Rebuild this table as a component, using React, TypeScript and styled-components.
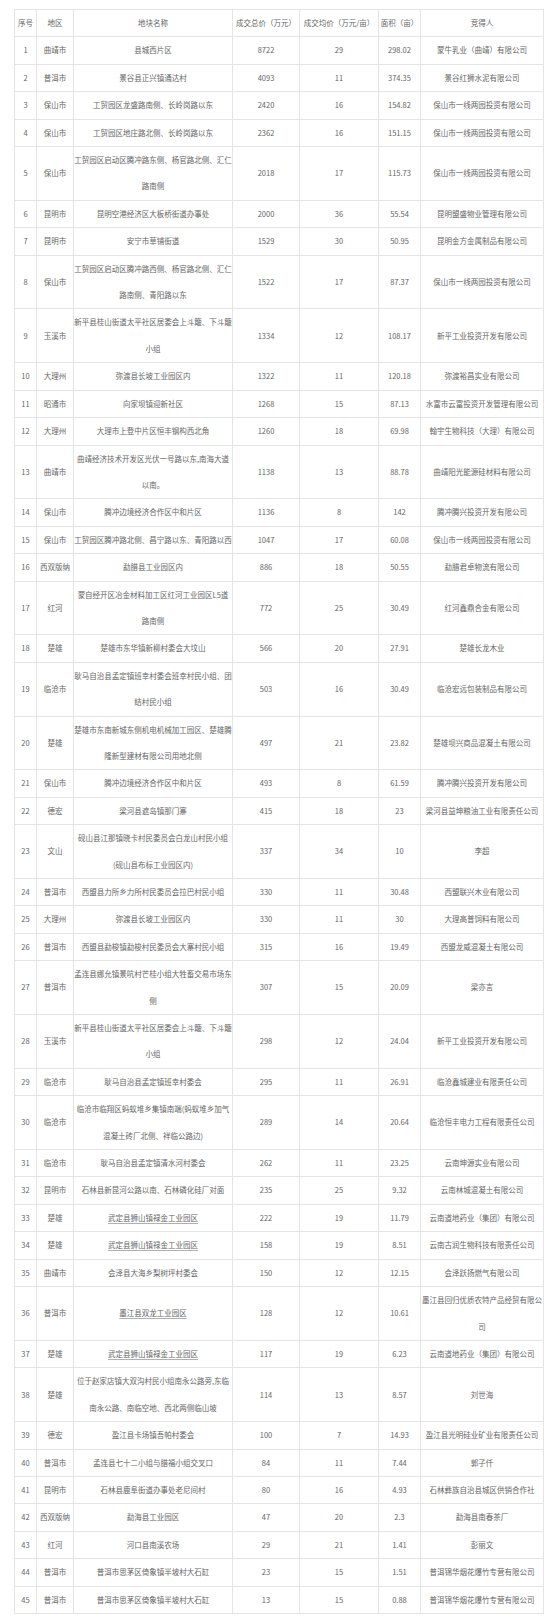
import React from "react";
import styled, { createGlobalStyle } from "styled-components";

const GlobalStyle = createGlobalStyle`
  html, body {
    margin: 0;
    padding: 0;
    background: #ffffff;
  }
  body {
    font-family: "Noto Sans CJK SC", "Microsoft YaHei", sans-serif;
  }
`;

const Page = styled.div`
  width: 550px;
  min-height: 1622px;
  box-sizing: border-box;
  padding: 9px 7px 0 14px;
  background: #ffffff;
`;

const Table = styled.table`
  width: 529px;
  table-layout: fixed;
  border-collapse: collapse;
  border: 1px solid #e4e4e4;
  color: #666666;
  font-family: "Noto Sans CJK SC", "Microsoft YaHei", sans-serif;
  font-size: 7.5px;
`;

const Col = styled.col<{ $w: number }>`
  width: ${(p) => p.$w}px;
`;

const HeadCell = styled.th`
  border: 1px solid #e4e4e4;
  padding: 0;
  font-weight: normal;
  text-align: center;
  line-height: 26.4px;
  white-space: nowrap;
  overflow: visible;
`;

const Cell = styled.td`
  border: 1px solid #e4e4e4;
  padding: 0;
  text-align: center;
  vertical-align: middle;
  line-height: 26.4px;
  overflow: visible;
`;

const Line = styled.span<{ $underline?: boolean }>`
  display: block;
  white-space: nowrap;
  text-decoration: ${(p) => (p.$underline ? "underline" : "none")};
  text-decoration-color: #b0b0b0;
  text-underline-offset: 2px;
`;

type Text = string | string[];
type Row = {
  no: number;
  region: string;
  name: Text;
  total: string;
  avg: string;
  area: string;
  buyer: Text;
  link?: boolean;
};

const headers = [
  "序号",
  "地区",
  "地块名称",
  "成交总价（万元）",
  "成交均价（万元/亩）",
  "面积（亩）",
  "竞得人",
];

const widths = [22, 37, 159, 67, 79, 42, 123];

const rows: Row[] = [
  { no: 1, region: "曲靖市", name: "县城西片区", total: "8722", avg: "29", area: "298.02", buyer: "蒙牛乳业（曲靖）有限公司" },
  { no: 2, region: "普洱市", name: "景谷县正兴镇通达村", total: "4093", avg: "11", area: "374.35", buyer: "景谷红狮水泥有限公司" },
  { no: 3, region: "保山市", name: "工贸园区龙盛路南侧、长岭岗路以东", total: "2420", avg: "16", area: "154.82", buyer: "保山市一线两园投资有限公司" },
  { no: 4, region: "保山市", name: "工贸园区地庄路北侧、长岭岗路以东", total: "2362", avg: "16", area: "151.15", buyer: "保山市一线两园投资有限公司" },
  { no: 5, region: "保山市", name: ["工贸园区启动区腾冲路东侧、杨官路北侧、汇仁", "路南侧"], total: "2018", avg: "17", area: "115.73", buyer: "保山市一线两园投资有限公司" },
  { no: 6, region: "昆明市", name: "昆明空港经济区大板桥街道办事处", total: "2000", avg: "36", area: "55.54", buyer: "昆明盟盛物业管理有限公司" },
  { no: 7, region: "昆明市", name: "安宁市草铺街道", total: "1529", avg: "30", area: "50.95", buyer: "昆明金方金属制品有限公司" },
  { no: 8, region: "保山市", name: ["工贸园区启动区腾冲路西侧、杨官路北侧、汇仁", "路南侧、青阳路以东"], total: "1522", avg: "17", area: "87.37", buyer: "保山市一线两园投资有限公司" },
  { no: 9, region: "玉溪市", name: ["新平县桂山街道太平社区居委会上斗簸、下斗簸", "小组"], total: "1334", avg: "12", area: "108.17", buyer: "新平工业投资开发有限公司" },
  { no: 10, region: "大理州", name: "弥渡县长坡工业园区内", total: "1322", avg: "11", area: "120.18", buyer: "弥渡裕昌实业有限公司" },
  { no: 11, region: "昭通市", name: "向家坝镇迎新社区", total: "1268", avg: "15", area: "87.13", buyer: "水富市云富投资开发管理有限公司" },
  { no: 12, region: "大理州", name: "大理市上登中片区恒丰钢构西北角", total: "1260", avg: "18", area: "69.98", buyer: "翰宇生物科技（大理）有限公司" },
  { no: 13, region: "曲靖市", name: ["曲靖经济技术开发区光伏一号路以东,南海大道", "以南。"], total: "1138", avg: "13", area: "88.78", buyer: "曲靖阳光能源硅材料有限公司" },
  { no: 14, region: "保山市", name: "腾冲边境经济合作区中和片区", total: "1136", avg: "8", area: "142", buyer: "腾冲腾兴投资开发有限公司" },
  { no: 15, region: "保山市", name: "工贸园区腾冲路北侧、昌宁路以东、青阳路以西", total: "1047", avg: "17", area: "60.08", buyer: "保山市一线两园投资有限公司" },
  { no: 16, region: "西双版纳", name: "勐腊县工业园区内", total: "886", avg: "18", area: "50.55", buyer: "勐腊君卓物流有限公司" },
  { no: 17, region: "红河", name: ["蒙自经开区冶金材料加工区红河工业园区L5道", "路南侧"], total: "772", avg: "25", area: "30.49", buyer: "红河鑫鼎合金有限公司" },
  { no: 18, region: "楚雄", name: "楚雄市东华镇新柳村委会大坟山", total: "566", avg: "20", area: "27.91", buyer: "楚雄长龙木业" },
  { no: 19, region: "临沧市", name: ["耿马自治县孟定镇班幸村委会班幸村民小组、团", "结村民小组"], total: "503", avg: "16", area: "30.49", buyer: "临沧宏远包装制品有限公司" },
  { no: 20, region: "楚雄", name: ["楚雄市东南新城东侧机电机械加工园区、楚雄腾", "隆新型建材有限公司用地北侧"], total: "497", avg: "21", area: "23.82", buyer: "楚雄坝兴商品混凝土有限公司" },
  { no: 21, region: "保山市", name: "腾冲边境经济合作区中和片区", total: "493", avg: "8", area: "61.59", buyer: "腾冲腾兴投资开发有限公司" },
  { no: 22, region: "德宏", name: "梁河县遮岛镇那门寨", total: "415", avg: "18", area: "23", buyer: "梁河县益坤粮油工业有限责任公司" },
  { no: 23, region: "文山", name: ["砚山县江那镇晓卡村民委员会白龙山村民小组", "(砚山县布标工业园区内)"], total: "337", avg: "34", area: "10", buyer: "李超" },
  { no: 24, region: "普洱市", name: "西盟县力所乡力所村民委员会拉巴村民小组", total: "330", avg: "11", area: "30.48", buyer: "西盟联兴木业有限公司" },
  { no: 25, region: "大理州", name: "弥渡县长坡工业园区内", total: "330", avg: "11", area: "30", buyer: "大理高普饲料有限公司" },
  { no: 26, region: "普洱市", name: "西盟县勐梭镇勐梭村民委员会大寨村民小组", total: "315", avg: "16", area: "19.49", buyer: "西盟龙威混凝土有限公司" },
  { no: 27, region: "普洱市", name: ["孟连县娜允镇景吭村芒桂小组大牲畜交易市场东", "侧"], total: "307", avg: "15", area: "20.09", buyer: "梁亦言" },
  { no: 28, region: "玉溪市", name: ["新平县桂山街道太平社区居委会上斗簸、下斗簸", "小组"], total: "298", avg: "12", area: "24.04", buyer: "新平工业投资开发有限公司" },
  { no: 29, region: "临沧市", name: "耿马自治县孟定镇班幸村委会", total: "295", avg: "11", area: "26.91", buyer: "临沧鑫城建业有限责任公司" },
  { no: 30, region: "临沧市", name: ["临沧市临翔区蚂蚁堆乡集镇南端(蚂蚁堆乡加气", "混凝土砖厂北侧、祥临公路边)"], total: "289", avg: "14", area: "20.64", buyer: "临沧恒丰电力工程有限责任公司" },
  { no: 31, region: "临沧市", name: "耿马自治县孟定镇清水河村委会", total: "262", avg: "11", area: "23.25", buyer: "云南坤源实业有限公司" },
  { no: 32, region: "昆明市", name: "石林县新昆河公路以南、石林磷化硅厂对面", total: "235", avg: "25", area: "9.32", buyer: "云南林城混凝土有限公司" },
  { no: 33, region: "楚雄", name: "武定县狮山镇禄金工业园区", total: "222", avg: "19", area: "11.79", buyer: "云南道地药业（集团）有限公司", link: true },
  { no: 34, region: "楚雄", name: "武定县狮山镇禄金工业园区", total: "158", avg: "19", area: "8.51", buyer: "云南古润生物科技有限责任公司", link: true },
  { no: 35, region: "曲靖市", name: "会泽县大海乡梨树坪村委会", total: "150", avg: "12", area: "12.15", buyer: "会泽跃扬燃气有限公司" },
  { no: 36, region: "普洱市", name: "墨江县双龙工业园区", total: "128", avg: "12", area: "10.61", buyer: ["墨江县回归优质农特产品经贸有限公", "司"], link: true },
  { no: 37, region: "楚雄", name: "武定县狮山镇禄金工业园区", total: "117", avg: "19", area: "6.23", buyer: "云南道地药业（集团）有限公司", link: true },
  { no: 38, region: "楚雄", name: ["位于赵家店镇大双沟村民小组南永公路旁,东临", "南永公路、南临空地、西北两侧临山坡"], total: "114", avg: "13", area: "8.57", buyer: "刘世海" },
  { no: 39, region: "德宏", name: "盈江县卡场镇吾帕村委会", total: "100", avg: "7", area: "14.93", buyer: "盈江县光明硅业矿业有限责任公司" },
  { no: 40, region: "普洱市", name: "孟连县七十二小组与腊福小组交叉口", total: "84", avg: "11", area: "7.44", buyer: "郭子仟" },
  { no: 41, region: "昆明市", name: "石林县鹿阜街道办事处老尼间村", total: "80", avg: "16", area: "4.93", buyer: "石林彝族自治县城区供销合作社" },
  { no: 42, region: "西双版纳", name: "勐海县工业园区", total: "47", avg: "20", area: "2.3", buyer: "勐海县南春茶厂" },
  { no: 43, region: "红河", name: "河口县南溪农场", total: "29", avg: "21", area: "1.41", buyer: "彭丽文" },
  { no: 44, region: "普洱市", name: "普洱市思茅区倚象镇半坡村大石缸", total: "23", avg: "15", area: "1.51", buyer: "普洱锦华烟花爆竹专营有限公司" },
  { no: 45, region: "普洱市", name: "普洱市思茅区倚象镇半坡村大石缸", total: "13", avg: "15", area: "0.88", buyer: "普洱锦华烟花爆竹专营有限公司" },
];

const Lines: React.FC<{ text: Text; underline?: boolean }> = ({ text, underline }) => {
  const list = Array.isArray(text) ? text : [text];
  return (
    <>
      {list.map((l, i) => (
        <Line key={i} $underline={underline}>
          {l}
        </Line>
      ))}
    </>
  );
};

export default function App() {
  return (
    <>
      <GlobalStyle />
      <Page>
        <Table>
          <colgroup>
            {widths.map((w, i) => (
              <Col key={i} $w={w} />
            ))}
          </colgroup>
          <thead>
            <tr>
              {headers.map((h) => (
                <HeadCell key={h}>{h}</HeadCell>
              ))}
            </tr>
          </thead>
          <tbody>
            {rows.map((r) => (
              <tr key={r.no}>
                <Cell>{r.no}</Cell>
                <Cell>
                  <Lines text={r.region} />
                </Cell>
                <Cell>
                  <Lines text={r.name} underline={r.link} />
                </Cell>
                <Cell>{r.total}</Cell>
                <Cell>{r.avg}</Cell>
                <Cell>{r.area}</Cell>
                <Cell>
                  <Lines text={r.buyer} />
                </Cell>
              </tr>
            ))}
          </tbody>
        </Table>
      </Page>
    </>
  );
}
